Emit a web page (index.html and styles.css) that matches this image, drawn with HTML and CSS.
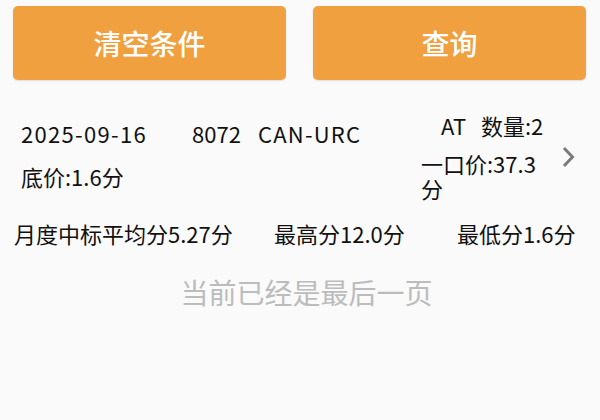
FILE: index.html
```html
<!DOCTYPE html>
<html lang="zh-CN">
<head>
<meta charset="utf-8">
<title>查询</title>
<link rel="stylesheet" href="styles.css">
</head>
<body>
<div class="actions">
  <button class="btn">清空条件</button>
  <button class="btn">查询</button>
</div>
<div class="item">
  <div class="item-main">
    <div class="line line-top">
      <span class="date">2025-09-16</span><span class="code">8072</span><span class="route">CAN-URC</span>
    </div>
    <div class="line line-floor">底价:1.6分</div>
  </div>
  <div class="item-side">
    <div class="line side-head">AT&nbsp;&nbsp;&nbsp;数量:2</div>
    <div class="side-price">一口价:37.3分</div>
  </div>
  <svg class="chevron" width="16" height="22" viewBox="0 0 16 22" aria-hidden="true">
    <path d="M3 2 L11.5 11 L3 20" fill="none" stroke="#7a7a7a" stroke-width="3"/>
  </svg>
</div>
<div class="stats">
  <span class="stat">月度中标平均分5.27分</span>
  <span class="stat">最高分12.0分</span>
  <span class="stat">最低分1.6分</span>
</div>
<div class="end">当前已经是最后一页</div>
</body>
</html>
```

FILE: styles.css
```css
html, body {
  margin: 0;
  padding: 0;
  background: #fafafa;
}
body {
  font-family: "Noto Sans CJK SC", "Noto Sans", sans-serif;
  color: #111;
  width: 600px;
  height: 420px;
  overflow: hidden;
}
.actions {
  display: flex;
  gap: 27px;
  padding: 6px 0 0 13px;
}
.btn {
  width: 273px;
  height: 74px;
  border: none;
  border-radius: 5px;
  background: #f0a03f;
  color: #fff;
  font-family: "Noto Sans CJK SC", sans-serif;
  font-size: 28px;
  font-weight: 500;
  padding: 0;
  box-shadow: 0 1px 2px rgba(0,0,0,0.12);
}
.item {
  display: flex;
  align-items: flex-start;
  padding-top: 32px;
}
.line {
  font-size: 22px;
  line-height: 26px;
  white-space: nowrap;
}
.item-main {
  padding-left: 21px;
  width: 400px;
  margin-top: 8px;
}
.date {
  display: inline-block;
  width: 171px;
  letter-spacing: 1.3px;
}
.code {
  display: inline-block;
  width: 66px;
}
.route {
  letter-spacing: 1.2px;
}
.line-floor {
  margin-top: 17px;
}
.item-side {
  width: 126px;
}
.side-head {
  padding-left: 20px;
}
.side-price {
  font-size: 22px;
  line-height: 25px;
  margin-top: 13px;
  word-break: break-all;
}
.chevron {
  margin-top: 34px;
  margin-left: 14px;
}
.stats {
  display: grid;
  grid-template-columns: 260px 183px auto;
  padding-left: 14px;
  margin-top: 19px;
  font-size: 22px;
  line-height: 26px;
  white-space: nowrap;
}
.end {
  margin-top: 28px;
  text-align: center;
  font-size: 28px;
  line-height: 36px;
  color: #bcbcbc;
  padding-left: 13px;
}
```
